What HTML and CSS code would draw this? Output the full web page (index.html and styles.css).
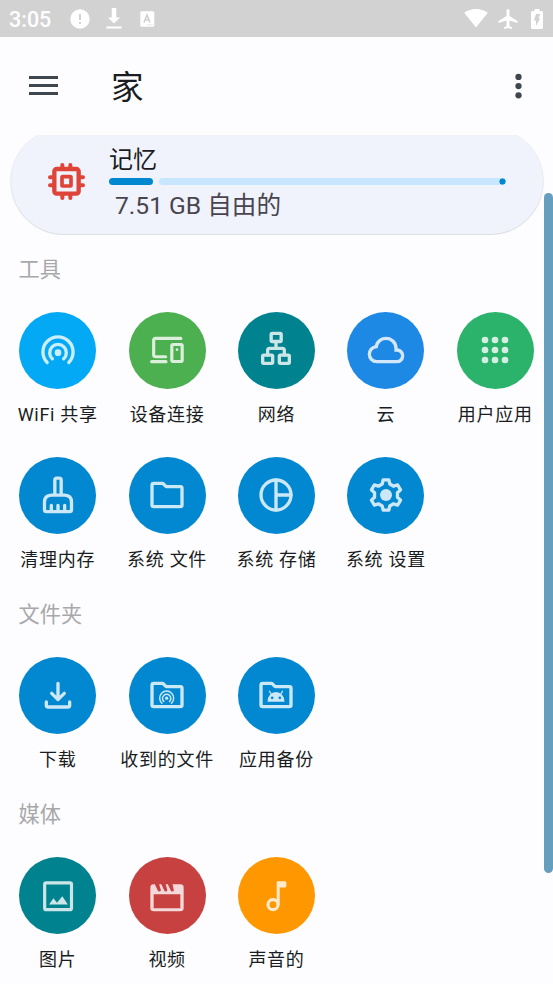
FILE: index.html
```html
<!DOCTYPE html>
<html lang="zh-CN">
<head>
<meta charset="utf-8">
<title>家</title>
<link rel="stylesheet" href="styles.css">
</head>
<body>
<div class="screen">
  <div class="status">
    <span class="clock">3:05</span>
    <svg class="s-alert" viewBox="0 0 20 20"><circle cx="10" cy="10" r="9.700" fill="#fff"/><path d="M10 5v6M10 13v2" stroke="#d2d2d3" stroke-width="2"/></svg>
    <svg class="s-down" viewBox="0 0 16 21"><path d="M5.700 0h4.600v9.500H14L8 15.500 2 9.500h3.700zM.4 18.500h15.200v2H.4z" fill="#fff"/></svg>
    <svg class="s-key" viewBox="0 0 15 16"><rect x=".3" y=".3" width="14" height="15.400" rx="1.500" fill="#fff"/><path d="M4 11.500 7 4l3 7.500M5.200 9h3.600" fill="none" stroke="#d2d2d3" stroke-width="1.700"/><path d="M7.500 13.800h5" stroke="#d2d2d3" stroke-dasharray="1 1"/></svg>
    <span class="grow"></span>
    <svg class="s-wifi" viewBox="0 0 24 19"><path d="M12 18.500.2 3.700Q5.500 0 12 0t11.800 3.700z" fill="#fff"/></svg>
    <svg class="s-plane" viewBox="2 2 20 20"><path d="M21.500 16v-2l-8-5V3.500a1.500 1.500 0 0 0-3 0V9l-8 5v2l8-2.500V19L8 20.500V22l4-1 4 1v-1.500L13.500 19v-5.500z" fill="#fff"/></svg>
    <svg class="s-bat" viewBox="0 0 12 20"><path d="M3.500 0h5v2h2Q12 2 12 3.500v15q0 1.500-1.500 1.500h-9Q0 20 0 18.500v-15Q0 2 1.500 2h2z" fill="#fff"/><path d="M5 5h4.200L7.500 9.500h1.700L5 17v-5.500H3z" fill="#d2d2d3"/></svg>
  </div>
  <header class="bar">
    <svg class="menu" viewBox="0 0 29 20"><path d="M0 1.500h29M0 9.500h29M0 17.500h29" stroke="#40464d" stroke-width="2.900"/></svg>
    <h1>家</h1>
    <svg class="more" viewBox="0 0 7 26"><g fill="#40464d"><circle cx="3.500" cy="3.900" r="3.150"/><circle cx="3.500" cy="13.100" r="3.150"/><circle cx="3.500" cy="22.300" r="3.150"/></g></svg>
  </header>
  <div class="card-clip">
    <div class="card">
      <svg class="chip" viewBox="0 0 111 111"><g fill="none" stroke="#de4437" stroke-linecap="round"><rect x="19" y="18" width="73" height="74" rx="7" stroke-width="13"/><rect x="42" y="41" width="27" height="28" rx="2" stroke-width="11"/><path stroke-width="12" d="M43 6v10M67 6v10M43 95v10M67 95v10M6 43h10M6 67h10M95 43h10M95 67h10"/></g></svg>
      <div class="mem">
        <div class="mem-title">记忆</div>
        <div class="progress"><i class="used"></i><i class="free"></i></div>
        <div class="mem-sub">7.51 GB 自由的</div>
      </div>
    </div>
  </div>
  <main>
    <h2>工具</h2>
    <div class="grid">
      <div class="tile"><div class="disc sky"><svg viewBox="0 0 24 24"><g class="line" stroke-width="2"><path d="M5.500 19.500a9.050 9.050 0 1 1 13 0"/><path d="M8.600 17.300a5 5 0 1 1 6.800 0"/><circle class="solid" cx="12" cy="13.600" r="2"/></g></svg></div><span>WiFi 共享</span></div>
      <div class="tile"><div class="disc green"><svg viewBox="0 0 24 24"><g class="line" stroke-width="1.900"><path d="M20.300 5.050H5.200q-1.200 0-1.200 1.200v8.600q0 1.200 1.200 1.200h6M2.800 19h8.600"/><rect x="14.900" y="8.700" width="6.200" height="10.200" rx=".7"/><circle class="solid" cx="18" cy="11.800" r=".8"/></g></svg></div><span>设备连接</span></div>
      <div class="tile"><div class="disc teal"><svg viewBox="0 0 24 24"><g class="line" stroke-width="2"><rect x="9.100" y="2" width="6" height="4.900" rx=".6"/><rect x="4" y="15.100" width="6" height="4.900" rx=".6"/><rect x="14" y="15.100" width="6" height="4.900" rx=".6"/><path d="M12 7v4M7 15v-2.800q0-1.200 1.200-1.200h7.600q1.200 0 1.200 1.200V15"/></g></svg></div><span>网络</span></div>
      <div class="tile"><div class="disc azure"><svg viewBox="0 0 24 24"><path class="fill" d="M6.500 20Q4.220 20 2.610 18.430 1 16.850 1 14.580 1 12.630 2.170 11.100 3.350 9.570 5.250 9.150 5.880 6.850 7.750 5.430 9.630 4 12 4 14.930 4 16.960 6.040 19 8.070 19 11q1.730.2 2.860 1.500Q23 13.780 23 15.500q0 1.880-1.310 3.190T18.500 20Zm0-2h12q1.050 0 1.770-.73Q21 16.550 21 15.500t-.73-1.770Q19.550 13 18.500 13H17V11q0-2.080-1.460-3.540T12 6 8.460 7.460 7 11H6.500q-1.450 0-2.470 1.020Q3 13.050 3 14.500t1.020 2.480T6.500 18Z"/></svg></div><span>云</span></div>
      <div class="tile"><div class="disc emerald"><svg viewBox="0 0 24 24"><g class="fill"><circle cx="6" cy="6" r="2"/><circle cx="12" cy="6" r="2"/><circle cx="18" cy="6" r="2"/><circle cx="6" cy="12" r="2"/><circle cx="12" cy="12" r="2"/><circle cx="18" cy="12" r="2"/><circle cx="6" cy="18" r="2"/><circle cx="12" cy="18" r="2"/><circle cx="18" cy="18" r="2"/></g></svg></div><span>用户应用</span></div>
      <div class="tile"><div class="disc"><svg viewBox="0 0 24 24"><g class="line" stroke-width="2"><path d="M10.100 11.500V3q0-1.100 1.100-1.100h1.600q1.100 0 1.100 1.100v8.500M8 12.100h8q4.100.2 4.100 4.200v4.600q0 1.100-1.200 1.100H5.100q-1.200 0-1.200-1.100v-4.600q0-4 4.100-4.200zM8 18.200V22M12 18.200V22M16 18.200V22"/></g></svg></div><span>清理内存</span></div>
      <div class="tile"><div class="disc"><svg viewBox="0 0 24 24"><g class="line" stroke-width="2"><path d="M3 6q0-1 1-1h5.500l2 2H20q1 0 1 1v10q0 1-1 1H4q-1 0-1-1z"/></g></svg></div><span>系统 文件</span></div>
      <div class="tile"><div class="disc"><svg viewBox="0 0 24 24"><g class="line" stroke-width="2"><circle cx="12" cy="12" r="9"/><path d="M12 3v18M12 12h9"/></g></svg></div><span>系统 存储</span></div>
      <div class="tile"><div class="disc"><svg viewBox="-12 -12 24 24"><g class="line" stroke-width="2"><path d="M-1.700-9.100 1.700-9.100 2.300-6.600 4.570-5.290 7.030-6.020 8.730-3.080 6.870-1.310 6.870 1.310 8.730 3.080 7.030 6.020 4.570 5.290 2.300 6.600 1.700 9.100-1.700 9.100-2.300 6.600-4.570 5.290-7.030 6.020-8.730 3.080-6.870 1.310-6.870-1.310-8.730-3.080-7.030-6.020-4.570-5.290-2.300-6.600z"/><circle class="solid" r="3.600"/></g></svg></div><span>系统 设置</span></div>
    </div>
    <h2>文件夹</h2>
    <div class="grid">
      <div class="tile"><div class="disc"><svg viewBox="0 0 24 24"><g class="line" stroke-width="2"><path d="M12 5v9.500M8.200 11l3.800 3.700 3.800-3.700M5 16.200v1.900q0 1.100 1.200 1.100h11.600q1.200 0 1.200-1.100v-1.900"/></g></svg></div><span>下载</span></div>
      <div class="tile"><div class="disc"><svg viewBox="0 0 24 24"><g class="line" stroke-width="2"><path d="M3 6q0-1 1-1h5.500l2 2H20q1 0 1 1v10q0 1-1 1H4q-1 0-1-1z"/><path stroke-width=".9" d="M8.900 16.900a4.200 4.200 0 1 1 5.800 0M10.100 15.900a2.500 2.500 0 1 1 3.400 0"/><circle class="solid" cx="11.800" cy="13.900" r="1"/></g></svg></div><span>收到的文件</span></div>
      <div class="tile"><div class="disc"><svg viewBox="0 0 24 24"><g class="line" stroke-width="2"><path d="M3 6q0-1 1-1h5.500l2 2H20q1 0 1 1v10q0 1-1 1H4q-1 0-1-1z"/><path class="solid" fill-rule="evenodd" d="M6.900 16a5.100 5.800 0 0 1 10.200 0zM8.900 13.700a.8.8 0 1 0 1.600 0 .8.8 0 1 0-1.600 0M13.500 13.700a.8.8 0 1 0 1.600 0 .8.8 0 1 0-1.600 0"/><path stroke-width=".7" d="M8 9.700l1.300 1.900M16 9.700l-1.300 1.900"/></g></svg></div><span>应用备份</span></div>
    </div>
    <h2>媒体</h2>
    <div class="grid">
      <div class="tile"><div class="disc teal"><svg viewBox="0 0 24 24"><g class="line" stroke-width="1.900"><rect x="4" y="4.100" width="16.100" height="16.100" rx=".9"/><path class="solid" d="M6.600 17.100l2.700-3.700 2.100 2.600 3.200-3.900 3.300 5z"/></g></svg></div><span>图片</span></div>
      <div class="tile"><div class="disc red"><svg viewBox="0 0 24 24"><path class="fill" fill-rule="evenodd" d="M4 5h.7L6.300 8.400q.4.900 1.100.9.900 0 .9-.9L7.300 5h1.300l1.600 3.400q.4.900 1.100.9.900 0 .9-.9L11.200 5h1.300l1.600 3.400q.4.900 1.100.9.900 0 .9-.9L15.300 5H20q2 0 2 2v12.200q0 2-2 2H4q-2 0-2-2V7Q2 5 4 5zM4 11v8.300h16V11z"/></svg></div><span>视频</span></div>
      <div class="tile"><div class="disc orange"><svg viewBox="0 0 24 24"><g class="line"><circle cx="10.200" cy="17.200" r="3" stroke-width="1.900"/><path class="solid" d="M12.400 15V4q0-.8.800-.8h4.100q.9 0 .9.900V6q0 .9-.9.900h-3.100v10.300H12.400z"/></g></svg></div><span>声音的</span></div>
    </div>
  </main>
  <div class="scrollbar"></div>
</div>
</body>
</html>
```
FILE: styles.css
```css
* { box-sizing: border-box; }
body {
  margin: 0;
  background: #fdfdff;
  color: #191c20;
  font-family: Roboto, "Noto Sans CJK SC", sans-serif;
}
svg { display: block; flex: none; }
h1, h2 { margin: 0; font-weight: 400; }
.screen { position: relative; width: 553px; height: 984px; overflow: hidden; }

.status {
  display: flex;
  align-items: center;
  height: 37px;
  padding: 0 10px 0 9px;
  background: #d2d2d3;
  color: #fff;
}
.clock { width: 60.500px; font-size: 21.500px; line-height: 37px; font-weight: 500; padding-top: 1px; }
.grow { flex: 1; }
.s-alert { width: 20px; height: 20px; }
.s-down { width: 16px; height: 21px; margin-left: 16px; }
.s-key { width: 15px; height: 16px; margin-left: 18px; }
.s-wifi { width: 24px; height: 19px; }
.s-plane { width: 20px; height: 20px; margin-left: 10px; }
.s-bat { width: 12px; height: 20px; margin-left: 13px; }

.bar { display: flex; align-items: center; height: 98px; padding: 0 31px 0 28.500px; }
.menu { width: 29px; height: 20px; }
.bar h1 { flex: 1; margin-left: 53.500px; padding-top: 4px; font-size: 32.500px; line-height: 94px; }
.more { width: 7px; height: 26px; }

.card-clip { height: 100px; padding: 0 10.500px; overflow: hidden; }
.card {
  display: flex;
  align-items: center;
  height: 105.500px;
  margin-top: -7px;
  padding: 1.500px 36.500px 0 37px;
  border-radius: 53px;
  background: #f0f3fb;
  box-shadow: 0 .5px 1px .5px #dcdde1;
}
.chip { width: 37px; height: 37px; }
.mem { flex: 1; margin-left: 24.500px; padding-top: 3px; }
.mem-title { font-size: 24px; line-height: 36px; }
.progress { display: flex; gap: 6px; height: 7px; }
.progress i { border-radius: 4px; }
.used { width: 44px; background: #0288d1; }
.free { flex: 1; background: radial-gradient(circle at calc(100% - 3.500px) 50%, #0288d1 2.800px, #c8e6ff 3.400px); }
.mem-sub { padding: 2px 0 0 6px; font-size: 24.600px; line-height: 37px; color: #49454f; }

main { padding: 21.500px 4px 0 3px; }
h2 { height: 55px; padding-left: 15.500px; font-size: 21.200px; line-height: 26px; color: #a8a8aa; }
.grid { display: grid; grid-template-columns: repeat(5, 109.400px); }
.tile { display: flex; flex-direction: column; align-items: center; height: 145.200px; }
.disc {
  display: grid;
  place-items: center;
  width: 77px;
  height: 77px;
  border-radius: 50%;
  background: #0288d1;
}
.disc svg { width: 40px; height: 40px; opacity: .8; }
.sky { background: #03a9f4; }
.green { background: #4caf50; }
.teal { background: #00838f; }
.azure { background: #1e88e5; }
.emerald { background: #2bb36b; }
.red { background: #c74141; }
.orange { background: #ff9800; }
.line { fill: none; stroke: #fff; stroke-linecap: round; stroke-linejoin: round; }
.solid { fill: #fff; stroke: none; }
.fill { fill: #fff; }
.tile span { margin-top: 12px; font-size: 18px; line-height: 27px; letter-spacing: .7px; white-space: nowrap; }

.scrollbar { position: absolute; right: 0; top: 193px; width: 9px; height: 680px; border-radius: 5px; background: #669fbe; }
```
